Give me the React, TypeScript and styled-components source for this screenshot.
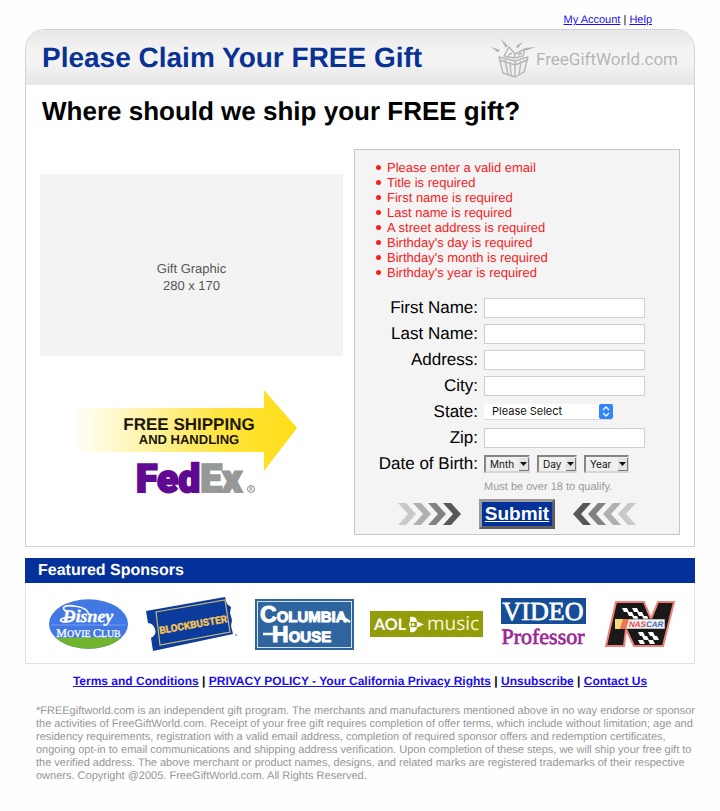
import React from "react";
import styled, { createGlobalStyle } from "styled-components";

const GlobalStyle = createGlobalStyle`
  *, *::before, *::after { box-sizing: border-box; }
  body {
    margin: 0;
    background: #fefefe;
    color: #000;
    font-family: "Liberation Sans", Arial, Helvetica, sans-serif;
    text-rendering: geometricPrecision;
  }
`;

const Page = styled.div`
  padding: 12px 25px 24px;
`;

const AccountNav = styled.nav`
  padding-right: 43px;
  text-align: right;
  font-size: 11px;
  line-height: 16px;
`;

const Link = styled.a`
  color: #1a0dee;
  text-decoration: underline;
`;

const Card = styled.main`
  margin-top: 1px;
  border: 1px solid #d0d0d0;
  border-radius: 20px 20px 0 0;
  background: #fff;
`;

const CardHeader = styled.header`
  display: flex;
  align-items: center;
  justify-content: space-between;
  height: 55px;
  padding: 0 16px;
  border-radius: 19px 19px 0 0;
  background: linear-gradient(#e8e8e8 0%, #f3f3f3 40%, #f3f3f3 60%, #e6e6e6 100%);
`;

const Title = styled.h1`
  margin: 0;
  color: #0a3194;
  font-size: 28px;
  line-height: 32px;
`;

const Brand = styled.div`
  display: flex;
  align-items: center;
  color: #b6b6b6;
  font-family: Roboto, sans-serif;
  font-size: 17px;
  line-height: 20px;
`;

const BrandName = styled.span`
  padding-top: 4px;
`;

const Question = styled.h2`
  margin: 0;
  padding: 10px 16px 0;
  font-size: 26px;
  line-height: 32px;
`;

const Columns = styled.div`
  display: grid;
  grid-template-columns: minmax(0, 303fr) minmax(0, 326fr);
  gap: 11px;
  padding: 22px 14px 11px;
`;

const GiftColumn = styled.div`
  display: flex;
  flex-direction: column;
  padding-top: 25px;
`;

const GiftGraphic = styled.div`
  display: flex;
  align-items: center;
  justify-content: center;
  height: 182px;
  padding-top: 23px;
  background: #f3f3f3;
  color: #555;
  text-align: center;
  font-size: 13px;
  line-height: 17px;
`;

const Shipping = styled.svg`
  display: block;
  margin: 32px 0 0 36px;
`;

const Panel = styled.form`
  padding: 10px 13px 5px 20px;
  border: 1px solid #c6c6c6;
  background: #f4f4f4;
`;

const Errors = styled.ul`
  margin: 0 0 15px;
  padding: 0 0 0 1px;
  color: #f9201c;
  font-size: 13px;
  line-height: 15px;
  list-style: none;
`;

const ErrorItem = styled.li`
  display: flex;
  align-items: center;
  gap: 6px;

  &::before {
    content: "";
    flex: none;
    width: 5px;
    height: 5px;
    border-radius: 50%;
    background: currentColor;
  }
`;

const Row = styled.div`
  display: grid;
  grid-template-columns: 103px 1fr;
  column-gap: 6px;
  align-items: center;
  height: 26px;
`;

const Label = styled.label`
  text-align: right;
  white-space: nowrap;
  font-size: 17px;
  line-height: 22px;
`;

const TextBox = styled.input`
  width: 161px;
  height: 20px;
  padding: 0 4px;
  border: 1px solid #cfcfcf;
  background: #fff;
  font-size: 12px;
`;

const SelectWrap = styled.span<{ $width: number }>`
  position: relative;
  display: block;
  width: ${(p) => p.$width}px;
`;

const StateSelect = styled.select`
  display: block;
  appearance: none;
  width: 100%;
  height: 16px;
  padding: 0 20px 0 8px;
  border: 0;
  border-bottom: 1px solid #d8d8d8;
  border-radius: 2px;
  background: #fff;
  color: #111;
  font-family: Inter, sans-serif;
  font-size: 11px;
  line-height: 15px;
`;

const DateSelect = styled.select`
  display: block;
  appearance: none;
  width: 100%;
  height: 18px;
  padding: 0 12px 0 4px;
  border: 2px solid;
  border-color: #868686 #d6d6d6 #d6d6d6 #868686;
  border-radius: 0;
  background: #efefef;
  color: #111;
  font-family: Inter, sans-serif;
  font-size: 10px;
  line-height: 14px;
`;

const Knob = styled.svg`
  position: absolute;
  top: 0;
  right: 0;
  pointer-events: none;
`;

const DropArrow = styled.svg`
  position: absolute;
  top: 3px;
  right: 1px;
  pointer-events: none;
`;

const DateGroup = styled.div`
  display: flex;
  gap: 7px;
`;

const Hint = styled.p`
  margin: 0 0 0 109px;
  color: #999;
  font-size: 11px;
  line-height: 20px;
`;

const SubmitRow = styled.div`
  display: flex;
  align-items: center;
  gap: 18px;
  margin: 2px 0 0 23px;
`;

const SubmitButton = styled.button`
  width: 76px;
  height: 30px;
  padding: 0;
  border: 3px solid;
  border-color: #9a9a9a #5f5f5f #5f5f5f #9a9a9a;
  background: #04309a;
  color: #fff;
  font-family: inherit;
  font-size: 19px;
  font-weight: bold;
  line-height: 22px;
  text-decoration: underline;
`;

const SponsorSection = styled.section`
  margin-top: 11px;
  border: 1px solid #e2e2e2;
  background: #fff;
`;

const SponsorTitle = styled.h3`
  margin: -1px -1px 0;
  padding: 0 13px;
  background: #04309a;
  color: #fff;
  font-size: 16px;
  line-height: 25px;
`;

const SponsorList = styled.div`
  display: flex;
  align-items: center;
  justify-content: space-between;
  height: 80px;
  padding: 2px 17px 0 22px;
`;

const FooterNav = styled.nav`
  margin-top: 9px;
  text-align: center;
  font-size: 12px;
  font-weight: bold;
  line-height: 16px;
`;

const Legal = styled.p`
  margin: 16px -6px 0 11px;
  color: #969696;
  font-size: 11px;
  line-height: 13px;
`;

const errors = [
  "Please enter a valid email",
  "Title is required",
  "First name is required",
  "Last name is required",
  "A street address is required",
  "Birthday's day is required",
  "Birthday's month is required",
  "Birthday's year is required",
];

function GiftIcon() {
  return (
    <svg width="46" height="40" viewBox="0 0 46 40" fill="none" stroke="#b6b6b6" strokeWidth="1.400" strokeLinejoin="round" aria-hidden="true">
      <g fill="#b0b0b0" stroke="none">
        <path d="M1 9l9 3-2 2.500z" />
        <path d="M11 1l7 7-2.500 1.500z" />
        <path d="M33 4l-7 4 1.500 2.500z" />
        <path d="M46 9l-11 1 .500 2.500z" />
      </g>
      <path fill="#efefef" d="M9 19l16 4 13-4-4 15-9 5-12-4z" />
      <path d="M25 23v16M9.500 22L25 27l12.500-5M15 22l3 14M20 24l1 13M31 23l-2 14" />
      <path fill="#f4f4f4" d="M24 20l-10-2 5-9 6 7 10-5-2 7z" />
      <path d="M24 20l1-4M18 17l4-2M28 17l4-2" />
    </svg>
  );
}

function ShippingArrow() {
  return (
    <Shipping width="230" height="116" viewBox="0 0 230 116" role="img" aria-label="Free shipping and handling, FedEx">
      <defs>
        <linearGradient id="arrowFade" x1="0" x2="1" y1="0" y2="0">
          <stop offset="0" stopColor="#fffef8" />
          <stop offset="0.35" stopColor="#fff2a0" />
          <stop offset="0.65" stopColor="#ffe540" />
          <stop offset="1" stopColor="#ffdd15" />
        </linearGradient>
      </defs>
      <path d="M0 20h188V2l33 38-33 43V64H0z" fill="url(#arrowFade)" />
      <g fill="#1c1708" fontFamily="Liberation Sans, Arial, sans-serif" fontWeight="bold" textAnchor="middle">
        <text x="113" y="42" fontSize="17">FREE SHIPPING</text>
        <text x="113" y="56" fontSize="13">AND HANDLING</text>
      </g>
      <text x="60" y="104" fill="#5f0a91" stroke="#5f0a91" strokeWidth="2" fontFamily="Roboto, sans-serif" fontWeight="900" fontSize="39">
        Fed<tspan fill="#969998" stroke="#969998">Ex</tspan>
      </text>
      <circle cx="175" cy="101" r="3.500" fill="none" stroke="#888" />
      <path d="M174 103v-4h1.500q1 1 0 2H174m1.500 0l1 2" fill="none" stroke="#888" strokeWidth="0.700" />
    </Shipping>
  );
}

function Chevrons({ reverse = false }: { reverse?: boolean }) {
  const shades = ["#c9c9c9", "#b0b0b0", "#828282", "#575757"];
  return (
    <svg width="63" height="22" viewBox="0 0 63 22" aria-hidden="true">
      <g transform={reverse ? "matrix(-1 0 0 1 63 0)" : undefined}>
        {shades.map((shade, i) => (
          <path key={shade} transform={`translate(${i * 15} 0)`} d="M0 0h8l10 11-10 11H0l10-11z" fill={shade} />
        ))}
      </g>
    </svg>
  );
}

function DisneyLogo() {
  return (
    <svg width="81" height="52" viewBox="0 0 82 52" role="img" aria-label="Disney Movie Club">
      <clipPath id="disneyOval"><ellipse cx="41" cy="26" rx="40" ry="25" /></clipPath>
      <g clipPath="url(#disneyOval)">
        <rect width="84" height="52" fill="#4278e4" />
        <path d="M0 41Q42 38 84 41v11H0z" fill="#6fb52e" />
        <path d="M3 27h76" stroke="#7fa6f2" strokeWidth="0.800" />
      </g>
      <path d="M19 13c-7-3-3-7 9-5 9 1 13 5 13 8M26 19c-9 0-15 2-13 4 2 1 6 1 9 0" fill="none" stroke="#fff" strokeWidth="1.600" strokeLinecap="round" />
      <text x="15" y="24" fill="#fff" stroke="#fff" strokeWidth="0.400" fontSize="18" fontStyle="italic" fontWeight="bold" fontFamily="Liberation Serif, serif">Disney</text>
      <text x="41" y="39" textAnchor="middle" fill="#fff" stroke="#fff" strokeWidth="0.300" fontFamily="Liberation Serif, serif" fontSize="10">
        <tspan fontSize="12">M</tspan>OVIE <tspan fontSize="12">C</tspan>LUB
      </text>
    </svg>
  );
}

function BlockbusterLogo() {
  return (
    <svg width="94" height="58" viewBox="0 0 94 58" role="img" aria-label="Blockbuster">
      <path d="M1 16l79-14 2 7 4 3-1 6 2 7-1 6 2 8L8 56l-2-13q6-3 4-9t-7-6z" fill="#0b3c9b" />
      <path d="M11 17l69-12 5 32-70 13z" fill="none" stroke="#c9b96f" strokeWidth="1.200" />
      <text transform="translate(15 39) rotate(-10)" fill="#f3c256" stroke="#f3c256" strokeWidth="0.400" fontFamily="Roboto, sans-serif" fontSize="10" fontWeight="bold">BLOCKBUSTER</text>
      <circle cx="91" cy="40" r="1" fill="#8892b5" />
    </svg>
  );
}

function ColumbiaLogo() {
  return (
    <svg width="99" height="51" viewBox="0 0 99 51" role="img" aria-label="Columbia House">
      <rect width="99" height="51" fill="#2f659f" />
      <rect x="2.500" y="2.500" width="94" height="46" fill="none" stroke="#d5e2ef" />
      <g fill="#fff" stroke="#fff" strokeWidth="1" fontFamily="Liberation Sans, sans-serif" fontWeight="bold" fontSize="15">
        <text x="5" y="23"><tspan fontSize="23">C</tspan>OLUMBIA</text>
        <text x="17" y="43"><tspan fontSize="23">H</tspan>OUSE</text>
      </g>
      <path d="M8 35h14" stroke="#fff" strokeWidth="2.500" />
      <path d="M86 17l9 6" stroke="#fff" strokeWidth="2.500" />
    </svg>
  );
}

function AolLogo() {
  return (
    <svg width="113" height="26" viewBox="0 0 113 26" role="img" aria-label="AOL Music">
      <rect width="113" height="26" fill="#929d09" />
      <text x="4" y="19" fill="#fff" fontFamily="Lato, sans-serif" fontSize="16" fontWeight="bold">AOL</text>
      <path d="M40 6q6-1 7 4l-2 1q-4-1-5 1zM40 21q6 1 7-4l-2-1q-4 1-5-1zM39 11q4 2.500 0 5z" fill="#fff" />
      <path d="M46 10l8 3.500-8 3.500q2-3.500 0-7z" fill="#fff" />
      <circle cx="43" cy="13.500" r="1.500" fill="#fff" />
      <text x="57" y="19" fill="#f7f8dc" fontFamily="Open Sans, sans-serif" fontSize="19">music</text>
    </svg>
  );
}

function VideoProfessorLogo() {
  return (
    <svg width="88" height="53" viewBox="0 0 88 53" role="img" aria-label="Video Professor">
      <rect width="85" height="26" x="2" fill="#154d99" />
      <g fontFamily="Liberation Serif, serif" textAnchor="middle" strokeWidth="0.700">
        <text x="44" y="22" fill="#fff" stroke="#fff" fontSize="26">VIDEO</text>
        <text x="44" y="46" fill="#9b2797" stroke="#9b2797" fontSize="22">Professor</text>
      </g>
    </svg>
  );
}

function NascarLogo() {
  const checks = [
    [19, 8], [29, 8], [24, 12], [34, 12], [29, 16], [39, 16],
    [35, 32], [45, 32], [39, 36], [49, 36], [35, 40], [45, 40],
  ];
  return (
    <svg width="74" height="49" viewBox="0 0 74 49" role="img" aria-label="NASCAR">
      <path d="M13 2h28l7 17 7-17h16L60 46H31l-8-17-2 17H3z" fill="#191919" stroke="#f07f75" strokeWidth="2" />
      {checks.map(([x, y]) => (
        <path key={`${x}-${y}`} d={`M${x} ${y}h5l2 4h-5z`} fill="#fff" />
      ))}
      <path d="M12 19h50v10H12z" fill="#f4f1ef" stroke="#191919" strokeWidth="0.500" />
      <path d="M12 19h10l-3 10h-7z" fill="#f2db79" />
      <path d="M20 19h6l-3 10h-6z" fill="#ef7353" />
      <text x="26" y="27" fill="#e14855" fontFamily="Liberation Sans, sans-serif" fontSize="8" fontWeight="bold" fontStyle="italic">
        NAS<tspan fill="#4169bd">CAR</tspan>
      </text>
    </svg>
  );
}

function Field({ id, label }: { id: string; label: string }) {
  return (
    <Row>
      <Label htmlFor={id}>{label}</Label>
      <TextBox id={id} name={id} type="text" />
    </Row>
  );
}

function DatePart({ id, name, width }: { id: string; name: string; width: number }) {
  return (
    <SelectWrap $width={width}>
      <DateSelect id={id} aria-label={name}>
        <option>{name}</option>
      </DateSelect>
      <DropArrow width="10" height="13" viewBox="0 0 10 13" aria-hidden="true">
        <path d="M0 0h10v13H0z" fill="#e2e2e2" />
        <path d="M9.500 0v12.500H0" fill="none" stroke="#777" />
        <path d="M1 4h7L4.500 8z" fill="#111" />
      </DropArrow>
    </SelectWrap>
  );
}

export default function App() {
  return (
    <>
      <GlobalStyle />
      <Page>
        <AccountNav>
          <Link href="#account">My Account</Link> | <Link href="#help">Help</Link>
        </AccountNav>

        <Card>
          <CardHeader>
            <Title>Please Claim Your FREE Gift</Title>
            <Brand>
              <GiftIcon />
              <BrandName>FreeGiftWorld.com</BrandName>
            </Brand>
          </CardHeader>
          <Question>Where should we ship your FREE gift?</Question>
          <Columns>
            <GiftColumn>
              <GiftGraphic>
                Gift Graphic
                <br />
                280 x 170
              </GiftGraphic>
              <ShippingArrow />
            </GiftColumn>

            <Panel onSubmit={(e) => e.preventDefault()}>
              <Errors>
                {errors.map((text) => (
                  <ErrorItem key={text}>{text}</ErrorItem>
                ))}
              </Errors>
              <Field id="first-name" label="First Name:" />
              <Field id="last-name" label="Last Name:" />
              <Field id="address" label="Address:" />
              <Field id="city" label="City:" />
              <Row>
                <Label htmlFor="state">State:</Label>
                <SelectWrap $width={129}>
                  <StateSelect id="state">
                    <option>Please Select</option>
                  </StateSelect>
                  <Knob width="14" height="15" viewBox="0 0 14 15" aria-hidden="true">
                    <rect width="14" height="15" rx="2" fill="#2f86f6" />
                    <path d="M4 6l3-3 3 3M4 9l3 3 3-3" fill="none" stroke="#fff" strokeWidth="1.300" />
                  </Knob>
                </SelectWrap>
              </Row>
              <Field id="zip" label="Zip:" />
              <Row>
                <Label htmlFor="birth-month">Date of Birth:</Label>
                <DateGroup>
                  <DatePart id="birth-month" name="Mnth" width={46} />
                  <DatePart id="birth-day" name="Day" width={40} />
                  <DatePart id="birth-year" name="Year" width={45} />
                </DateGroup>
              </Row>
              <Hint>Must be over 18 to qualify.</Hint>
              <SubmitRow>
                <Chevrons />
                <SubmitButton type="submit">Submit</SubmitButton>
                <Chevrons reverse />
              </SubmitRow>
            </Panel>
          </Columns>
        </Card>

        <SponsorSection>
          <SponsorTitle>Featured Sponsors</SponsorTitle>
          <SponsorList>
            <DisneyLogo />
            <BlockbusterLogo />
            <ColumbiaLogo />
            <AolLogo />
            <VideoProfessorLogo />
            <NascarLogo />
          </SponsorList>
        </SponsorSection>

        <FooterNav>
          <Link href="#terms">Terms and Conditions</Link> |{" "}
          <Link href="#privacy">PRIVACY POLICY - Your California Privacy Rights</Link> |{" "}
          <Link href="#unsubscribe">Unsubscribe</Link> | <Link href="#contact">Contact Us</Link>
        </FooterNav>

        <Legal>
          *FREEgiftworld.com is an independent gift program. The merchants and manufacturers mentioned above in no way
          endorse or sponsor the activities of FreeGiftWorld.com. Receipt of your free gift requires completion of offer
          terms, which include without limitation; age and residency requirements, registration with a valid email
          address, completion of required sponsor offers and redemption certificates, ongoing opt-in to email
          communications and shipping address verification. Upon completion of these steps, we will ship your free gift
          to the verified address. The above merchant or product names, designs, and related marks are registered
          trademarks of their respective owners. Copyright @2005. FreeGiftWorld.com. All Rights Reserved.
        </Legal>
      </Page>
    </>
  );
}
